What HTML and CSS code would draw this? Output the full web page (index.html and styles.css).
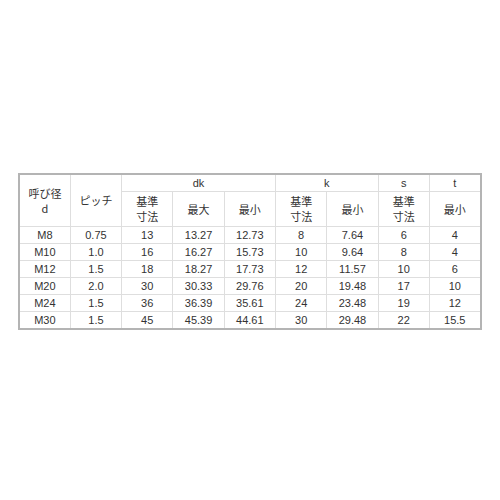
FILE: index.html
```html
<!DOCTYPE html>
<html lang="ja">
<head>
<meta charset="utf-8">
<link rel="stylesheet" href="styles.css">
</head>
<body>
<div class="page">
<table class="spec">
  <colgroup>
    <col class="c"><col class="c"><col class="c"><col class="c"><col class="c"><col class="c"><col class="c"><col class="c"><col class="c">
  </colgroup>
  <thead>
    <tr class="h1">
      <th rowspan="2">呼び径<br>d</th>
      <th rowspan="2">ピッチ</th>
      <th colspan="3">dk</th>
      <th colspan="2">k</th>
      <th>s</th>
      <th>t</th>
    </tr>
    <tr class="h2">
      <th>基準<br>寸法</th>
      <th>最大</th>
      <th>最小</th>
      <th>基準<br>寸法</th>
      <th>最小</th>
      <th>基準<br>寸法</th>
      <th>最小</th>
    </tr>
  </thead>
  <tbody>
    <tr><td>M8</td><td>0.75</td><td>13</td><td>13.27</td><td>12.73</td><td>8</td><td>7.64</td><td>6</td><td>4</td></tr>
    <tr><td>M10</td><td>1.0</td><td>16</td><td>16.27</td><td>15.73</td><td>10</td><td>9.64</td><td>8</td><td>4</td></tr>
    <tr><td>M12</td><td>1.5</td><td>18</td><td>18.27</td><td>17.73</td><td>12</td><td>11.57</td><td>10</td><td>6</td></tr>
    <tr><td>M20</td><td>2.0</td><td>30</td><td>30.33</td><td>29.76</td><td>20</td><td>19.48</td><td>17</td><td>10</td></tr>
    <tr><td>M24</td><td>1.5</td><td>36</td><td>36.39</td><td>35.61</td><td>24</td><td>23.48</td><td>19</td><td>12</td></tr>
    <tr><td>M30</td><td>1.5</td><td>45</td><td>45.39</td><td>44.61</td><td>30</td><td>29.48</td><td>22</td><td>15.5</td></tr>
  </tbody>
</table>
</div>
</body>
</html>
```
FILE: styles.css
```css
html, body {
  margin: 0;
  padding: 0;
  background: #ffffff;
}
.page {
  width: 500px;
  height: 500px;
  padding: 173px 0 0 18px;
  box-sizing: border-box;
}
.spec {
  border-collapse: collapse;
  table-layout: fixed;
  width: 462px;
  border: 2px solid #b4b4b4;
  font-family: "Liberation Sans", "Noto Sans CJK JP", sans-serif;
  font-size: 11px;
  color: #333333;
}
.spec col.c {
  width: 51.3px;
}
.spec th, .spec td {
  border: 1px solid #dedede;
  padding: 0;
  text-align: center;
  vertical-align: middle;
  font-weight: normal;
  line-height: 15px;
}
.spec th {
  font-family: "Noto Sans CJK JP", "Liberation Sans", sans-serif;
}
.spec tr.h1 th {
  height: 16px;
}
.spec tr.h1 th[colspan], .spec tr.h1 th:nth-child(n+3) {
  font-family: "Liberation Sans", sans-serif;
}
.spec tr.h2 th {
  height: 34px;
}
.spec td {
  height: 16px;
}
```
